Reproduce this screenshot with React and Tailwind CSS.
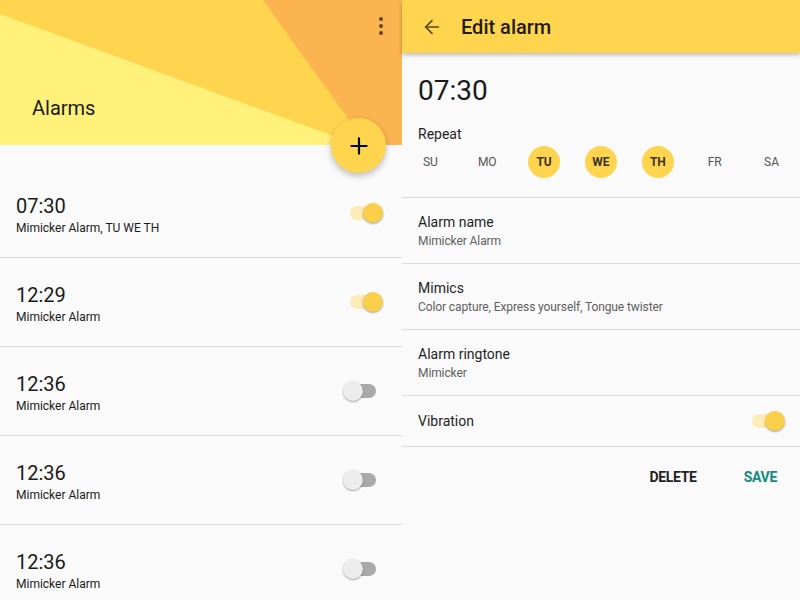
import { ArrowLeft, Plus } from 'lucide-react';

const alarms = [
  { time: '07:30', label: 'Mimicker Alarm, TU WE TH', on: true },
  { time: '12:29', label: 'Mimicker Alarm', on: true },
  { time: '12:36', label: 'Mimicker Alarm', on: false },
  { time: '12:36', label: 'Mimicker Alarm', on: false },
  { time: '12:36', label: 'Mimicker Alarm', on: false },
];

const days = [
  { d: 'SU', on: false },
  { d: 'MO', on: false },
  { d: 'TU', on: true },
  { d: 'WE', on: true },
  { d: 'TH', on: true },
  { d: 'FR', on: false },
  { d: 'SA', on: false },
];

function Toggle({ on }) {
  return (
    <div className="relative w-[40px] h-[20px] shrink-0">
      {on ? (
        <>
          <div className="absolute left-[7px] right-[3px] top-[3px] h-[14px] rounded-full bg-[#fcebb6]" />
          <div className="absolute left-[20px] top-0 w-[20px] h-[20px] rounded-full bg-[#f9cf4b] shadow-[0_1px_2px_rgba(0,0,0,0.35)]" />
        </>
      ) : (
        <>
          <div className="absolute left-[6px] right-[7px] top-[3px] h-[14px] rounded-full bg-[#a9a9a9]" />
          <div className="absolute left-0 top-0 w-[20px] h-[20px] rounded-full bg-[#ececec] shadow-[0_1px_2px_rgba(0,0,0,0.35)]" />
        </>
      )}
    </div>
  );
}

function AlarmList() {
  return (
    <div className="relative w-[402px] h-full bg-[#fafafa] shrink-0">
      {/* Header with fan */}
      <div className="relative h-[145px] overflow-hidden">
        <svg className="absolute inset-0" width="402" height="145" viewBox="0 0 402 145">
          <rect width="402" height="145" fill="#ffd54f" />
          <polygon points="0,14 358,145 0,145" fill="#fff17a" />
          <polygon points="263,0 402,0 402,145 367,145" fill="#fbb44f" />
        </svg>
        <div className="relative flex justify-between h-full">
          <div className="pl-8 pt-[94px] text-[20px] leading-7 text-[#1a1a1a]">Alarms</div>
          <div className="flex flex-col gap-[3px] pt-[17px] pr-[19px]">
            <div className="w-[4px] h-[4px] rounded-full bg-[#5b4522]" />
            <div className="w-[4px] h-[4px] rounded-full bg-[#5b4522]" />
            <div className="w-[4px] h-[4px] rounded-full bg-[#5b4522]" />
          </div>
        </div>
      </div>

      {/* FAB */}
      <div className="absolute left-[331px] top-[118px] w-[55px] h-[55px] rounded-full bg-[#ffd54f] shadow-[0_3px_6px_rgba(0,0,0,0.25)] flex items-center justify-center">
        <Plus size={26} strokeWidth={2} className="text-black" />
      </div>

      <div className="pt-[24px]">
        {alarms.map((a, i) => (
          <div key={i} className="h-[89px] flex items-center justify-between pl-4 pr-[19px] border-b border-[#dadada]">
            <div className="text-[#1a1a1a] pt-[3px]">
              <div className="text-[20px] leading-6">{a.time}</div>
              <div className="text-[12px] leading-4 mt-[2px]">{a.label}</div>
            </div>
            <Toggle on={a.on} />
          </div>
        ))}
      </div>
    </div>
  );
}

function Row({ title, sub }) {
  return (
    <div className="h-[66px] flex flex-col justify-center px-4 border-b border-[#dadada]">
      <div className="text-[14px] leading-5 text-[#1f1f1f]">{title}</div>
      <div className="text-[12px] leading-4 text-[#5f5f5f] mt-[1px] tracking-[-0.1px]">{sub}</div>
    </div>
  );
}

function EditAlarm() {
  return (
    <div className="flex-1 h-full bg-[#fafafa] flex flex-col">
      <div className="relative z-10 h-[53px] bg-[#ffd54f] shadow-[0_2px_4px_rgba(0,0,0,0.25)] flex items-center pl-[19px] gap-[18px]">
        <ArrowLeft size={22} strokeWidth={1.8} className="text-[#5a4a1c]" />
        <span className="text-[20px] font-medium text-[#1f1a0a]">Edit alarm</span>
      </div>

      <div className="px-4 pt-[21px] text-[28px] leading-[34px] text-[#1a1a1a]">07:30</div>
      <div className="px-4 mt-4 text-[14px] leading-5 text-[#1f1f1f]">Repeat</div>
      <div className="grid grid-cols-7 mt-[2px] pb-[19px] border-b border-[#dadada]">
        {days.map((d) => (
          <div key={d.d} className="flex justify-center">
            <div
              className={
                d.on
                  ? 'w-[32px] h-[32px] rounded-full bg-[#ffd54f] flex items-center justify-center text-[12px] font-bold text-[#3a3222]'
                  : 'w-[32px] h-[32px] flex items-center justify-center text-[12px] text-[#555]'
              }
            >
              {d.d}
            </div>
          </div>
        ))}
      </div>

      <Row title="Alarm name" sub="Mimicker Alarm" />
      <Row title="Mimics" sub="Color capture, Express yourself, Tongue twister" />
      <Row title="Alarm ringtone" sub="Mimicker" />

      <div className="h-[51px] flex items-center justify-between pl-4 pr-[15px] border-b border-[#dadada]">
        <span className="text-[14px] text-[#1f1f1f]">Vibration</span>
        <Toggle on />
      </div>

      <div className="flex justify-end gap-[47px] pr-[23px] mt-[20px] text-[14px] leading-5 font-bold tracking-[-0.3px]">
        <span className="text-[#1f1f1f]">DELETE</span>
        <span className="text-[#14897a]">SAVE</span>
      </div>
    </div>
  );
}

export default function App() {
  return (
    <div className="w-[800px] h-[600px] overflow-hidden flex" style={{ fontFamily: 'Roboto, "Noto Sans", sans-serif' }}>
      <AlarmList />
      <EditAlarm />
    </div>
  );
}
